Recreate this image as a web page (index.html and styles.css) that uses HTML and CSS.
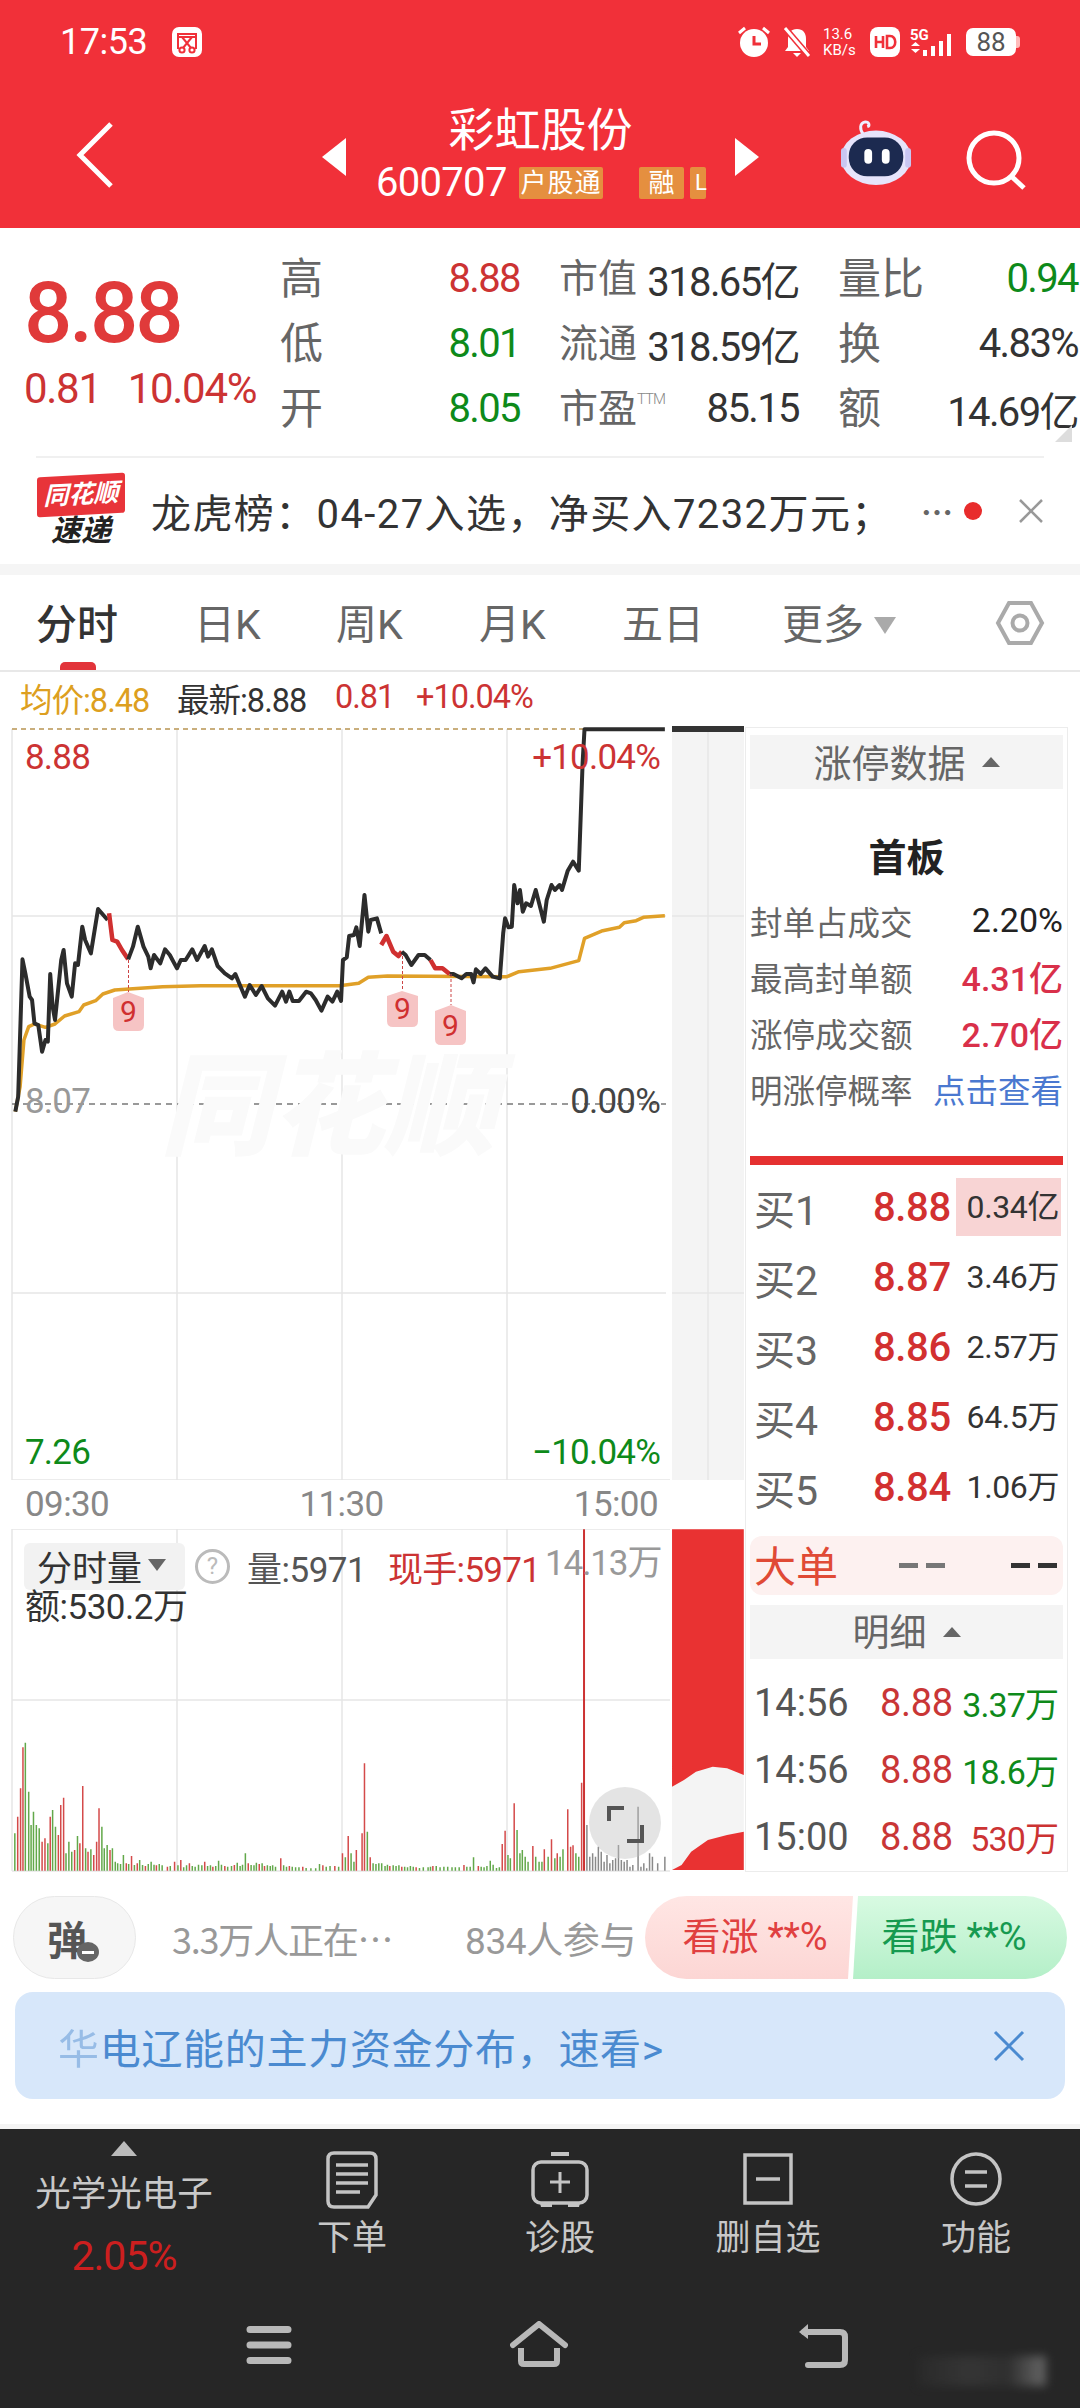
FILE: index.html
```html
<!DOCTYPE html>
<html lang="zh-CN">
<head>
    <meta charset="UTF-8">
    <meta name="viewport" content="width=device-width, initial-scale=1.0">
    <title>彩虹股份</title>
    <link rel="stylesheet" href="styles.css">
</head>
<body>
    <header class="app-head">
        <div class="status-bar">
            <span class="clock">17:53</span>
            <svg class="st-shot" width="30" height="30" viewBox="0 0 30 30">
                <rect width="30" height="30" rx="7" fill="#fff"/>
                <path d="M6 7h18v3H6zM6 7v15M24 7v15" fill="none" stroke="#f03039" stroke-width="2"/>
                <path d="M10 10l9 11M20 10l-9 11" stroke="#f03039" stroke-width="2"/>
                <circle cx="10" cy="23" r="2.6" fill="none" stroke="#f03039" stroke-width="2"/>
                <circle cx="20" cy="23" r="2.6" fill="none" stroke="#f03039" stroke-width="2"/>
            </svg>
            <div class="st-right">
                <svg width="34" height="32" viewBox="0 0 34 32">
                    <circle cx="17" cy="17" r="14" fill="#fff"/>
                    <path d="M17 10v8h7" fill="none" stroke="#f03039" stroke-width="3"/>
                    <path d="M2 7l6-5M32 7l-6-5" stroke="#fff" stroke-width="3"/>
                </svg>
                <svg class="st-gap" width="32" height="32" viewBox="0 0 32 32">
                    <path d="M16 3c-6 0-9 4-9 10v8l-3 4h24l-3-4v-8c0-6-3-10-9-10z" fill="#fff"/>
                    <path d="M12 27h8l-4 4z" fill="#fff"/>
                    <path d="M4 2l24 28" stroke="#f03039" stroke-width="6"/>
                    <path d="M4 2l24 28" stroke="#fff" stroke-width="3"/>
                </svg>
                <div class="st-speed"><span>13.6</span><span>KB/s</span></div>
                <svg class="st-gap" width="30" height="30" viewBox="0 0 30 30">
                    <rect width="30" height="30" rx="8" fill="#fff"/>
                    <path d="M6 9v12M13 9v12M6 15h7M17 9v12h3c7 0 7-12 0-12z" fill="none" stroke="#f03039" stroke-width="2.6"/>
                </svg>
                <svg class="st-gap" width="46" height="32" viewBox="0 0 46 32">
                    <text class="st-5g" x="0" y="14">5G</text>
                    <path d="M1 20h9l-4.500-4zM1 23h9l-4.500 4z" fill="#fff"/>
                    <path d="M15 24v6M23 20v10M31 15v15M39 8v22" stroke="#fff" stroke-width="4"/>
                </svg>
                <div class="st-batt">88</div>
            </div>
        </div>
        <div class="stock-nav">
            <svg class="nav-back" width="38" height="66" viewBox="0 0 38 66">
                <path d="M35 2L4 33l31 31" fill="none" stroke="#fff" stroke-width="5"/>
            </svg>
            <svg class="nav-prev" width="24" height="38" viewBox="0 0 24 38"><path d="M24 0v38L0 19z" fill="#fff"/></svg>
            <div class="stock-name">
                <div class="stock-title">彩虹股份</div>
                <div class="stock-sub">
                    <span class="stock-code">600707</span>
                    <span class="tag tag-hk">户股通</span>
                    <span class="tag tag-rong">融</span>
                    <span class="tag tag-cut">L</span>
                </div>
            </div>
            <svg class="nav-next" width="24" height="38" viewBox="0 0 24 38"><path d="M0 0v38l24-19z" fill="#fff"/></svg>
            <svg class="nav-robot" width="72" height="68" viewBox="0 0 74 68">
                <path d="M24 16c-4-5-4-12 2-13 4 0 5 4 2 5" fill="none" stroke="#eef" stroke-width="3"/>
                <ellipse cx="37" cy="40" rx="36" ry="28" fill="#e6e4fb"/>
                <rect x="1" y="30" width="6" height="20" rx="3" fill="#c9c6f2"/>
                <rect x="67" y="30" width="6" height="20" rx="3" fill="#c9c6f2"/>
                <rect x="9" y="19" width="56" height="40" rx="19" fill="#1c2a50"/>
                <rect x="25" y="31" width="8" height="15" rx="4" fill="#fff"/>
                <rect x="43" y="31" width="8" height="15" rx="4" fill="#fff"/>
            </svg>
            <svg class="nav-search" width="62" height="60" viewBox="0 0 62 60">
                <circle cx="29" cy="28" r="25" fill="none" stroke="#fff" stroke-width="5"/>
                <path d="M46 46l13 12" stroke="#fff" stroke-width="5"/>
            </svg>
        </div>
    </header>

    <section class="quote">
        <div class="quote-now">
            <div class="price-big">8.88</div>
            <div class="price-diff"><span>0.81</span><span>10.04%</span></div>
        </div>
        <div class="quote-grid">
            <div class="stat"><span class="lbl lbl-big">高</span><span class="val val-up">8.88</span></div>
            <div class="stat"><span class="lbl">市值</span><span class="val">318.65亿</span></div>
            <div class="stat"><span class="lbl lbl-big">量比</span><span class="val val-down">0.94</span></div>
            <div class="stat"><span class="lbl lbl-big">低</span><span class="val val-down">8.01</span></div>
            <div class="stat"><span class="lbl">流通</span><span class="val">318.59亿</span></div>
            <div class="stat"><span class="lbl lbl-big">换</span><span class="val">4.83%</span></div>
            <div class="stat"><span class="lbl lbl-big">开</span><span class="val val-down">8.05</span></div>
            <div class="stat"><span class="lbl">市盈<sup class="ttm">TTM</sup></span><span class="val">85.15</span></div>
            <div class="stat"><span class="lbl lbl-big">额</span><span class="val">14.69亿</span></div>
        </div>
        <div class="quote-corner"></div>
    </section>

    <section class="news">
        <div class="news-logo">
            <span class="logo-top">同花顺</span>
            <span class="logo-bottom">速递</span>
        </div>
        <div class="news-text">龙虎榜：04-27入选，净买入7232万元；</div>
        <span class="news-more">…</span>
        <span class="news-dot"></span>
        <svg class="news-close" width="24" height="24" viewBox="0 0 24 24">
            <path d="M1 1l22 22M23 1L1 23" stroke="#999" stroke-width="2.500"/>
        </svg>
    </section>

    <nav class="tabs">
        <a class="tab tab-on">分时</a>
        <a class="tab tab-d">日K</a>
        <a class="tab tab-w">周K</a>
        <a class="tab tab-m">月K</a>
        <a class="tab tab-5">五日</a>
        <a class="tab tab-more">更多<i class="tri-down"></i></a>
        <svg class="tab-gear" width="50" height="46" viewBox="0 0 50 46">
            <path d="M14 3h22l11 20-11 20H14L3 23z" fill="none" stroke="#aaa" stroke-width="4"/>
            <circle cx="25" cy="23" r="7.500" fill="none" stroke="#aaa" stroke-width="4"/>
        </svg>
    </nav>

    <div class="legend">
        <span class="lg-avg">均价:8.48</span>
        <span class="lg-last">最新:8.88</span>
        <span class="lg-diff">0.81</span>
        <span class="lg-pct">+10.04%</span>
    </div>

    <main class="board">
        <div class="chart-col">
            <svg class="price-chart" width="745" height="758" viewBox="0 722 745 758">
                <rect x="672" y="726" width="72" height="754" fill="#f4f4f4"/>
                <rect x="672" y="726" width="72" height="6" fill="#333"/>
                <path d="M708 732V1480M672 916H744M672 1293H744" stroke="#e6e6e6" stroke-width="1.500"/>
                <path d="M12 729V1480M177 729V1480M342 729V1480M507 729V1480M12 1480H670M12 916H666M12 1293H666" stroke="#e6e6e6" stroke-width="1.500"/>
                <path d="M12 729H585" stroke="#c9ae7c" stroke-width="2" stroke-dasharray="5 4"/>
                <path d="M12 1104H666" stroke="#999" stroke-width="2" stroke-dasharray="6 5"/>
                <text class="wm" x="160" y="1146">同花顺</text>

                <svg x="0" y="720" width="750" height="400" viewBox="0 0 1568 1200" preserveAspectRatio="none">
                    <polyline class="line-avg" points="32,1175 42,1100 50,960 60,920 72,912 95,922 115,912 135,888 165,875 175,855 200,842 215,822 240,810 270,807 340,800 420,797 710,797 750,790 770,772 810,768 1060,770 1085,755 1150,745 1210,722 1222,655 1260,632 1295,622 1305,608 1330,602 1345,592 1390,587"/>
                    <polyline class="line-price" points="32,1175 38,1130 47,718 53,760 62,830 67,840 72,910 80,915 88,995 95,960 100,965 105,762 110,860 115,900 128,720 133,690 140,790 150,830 157,730 163,735 172,620 178,660 190,700 205,567 225,600"/>
                    <polyline class="line-down" points="228,580 235,660 245,665 255,690 268,718"/>
                    <polyline class="line-price" points="268,718 278,680 288,620 300,680 310,710 315,745 322,705 335,730 345,688 355,705 370,745 378,720 388,720 402,688 412,720 428,678 435,710 443,688 455,738 470,760 485,775 492,762 500,790 512,830 522,795 535,825 547,798 560,835 575,857 590,815 598,845 605,815 612,843 625,843 640,815 650,820 660,840 672,872 685,830 695,845 705,815 713,843 717,720 725,712 730,648 740,645 745,622 752,678 762,525 770,635 775,600 788,595 797,640"/>
                    <polyline class="line-down" points="797,675 808,648 822,695 833,708 840,695"/>
                    <polyline class="line-price" points="840,695 848,705 860,735 875,705 888,705 900,720"/>
                    <polyline class="line-down" points="900,720 910,745 925,745 940,762"/>
                    <polyline class="line-price" points="940,762 948,762 965,775 975,762 985,762 990,787 995,748 1005,762 1015,745 1030,770 1045,775 1052,640 1056,595 1063,622 1070,620 1075,495 1082,550 1087,510 1093,575 1100,550 1110,558 1120,510 1137,605 1143,540 1153,495 1160,510 1170,495 1175,510 1187,452 1198,425 1210,452 1218,130 1222,28 1390,28"/>
                </svg>

                <path d="M128.500 960V992M402.500 956V991M451 974V1005" stroke="#c44" stroke-width="1" stroke-dasharray="3 2"/>
                <path d="M113 998l15-6 16 6v27q0 6-6 6h-19q-6 0-6-6z" fill="#f6c4c4"/>
                <path d="M387 996l15-5 16 5v25q0 6-6 6h-19q-6 0-6-6z" fill="#f6c4c4"/>
                <path d="M435 1011l16-6 15 6v28q0 6-6 6h-19q-6 0-6-6z" fill="#f6c4c4"/>
                <text class="mark" x="128.500" y="1022">9</text>
                <text class="mark" x="402.500" y="1019">9</text>
                <text class="mark" x="450.500" y="1036">9</text>

                <text class="axis up-fill" x="25" y="769">8.88</text>
                <text class="axis up-fill" x="660" y="769" text-anchor="end">+10.04%</text>
                <text class="axis gray-fill" x="25" y="1113">8.07</text>
                <text class="axis dark-fill" x="660" y="1113" text-anchor="end">0.00%</text>
                <text class="axis down-fill" x="25" y="1464">7.26</text>
                <text class="axis down-fill" x="660" y="1464" text-anchor="end">−10.04%</text>
            </svg>
            <div class="time-axis"><span>09:30</span><span>11:30</span><span>15:00</span></div>
            <div class="vol-wrap">
                <svg class="vol-chart" width="745" height="343" viewBox="0 1529 745 343">
                    <path d="M12 1529V1871M177 1529V1871M342 1529V1871M507 1529V1871M12 1529H670M12 1700H670M12 1871H670" stroke="#e6e6e6" stroke-width="1.500"/>
                    <svg x="0" y="1500" width="750" height="400" viewBox="0 0 1568 1200" preserveAspectRatio="none">
                        <rect x="1405" y="88" width="150" height="1022" fill="#f4f4f4"/>
                        <path d="M1405 88H1555V825L1520 805 1490 800 1455 815 1430 840 1405 860Z" fill="#e93232"/>
                        <path d="M1405 1110L1425 1095 1445 1055 1480 1020 1520 1005 1555 995V1110Z" fill="#e93232"/>
                        <path class="bars bar-up" d="M37 950V1112M43 865V1112M48 742V1112M88 1025V1112M94 1015V1112M105 950V1112M122 1005V1112M127 915V1112M133 893V1112M156 1050V1112M167 1030V1112M173 858V1112M184 1055V1112M196 1065V1112M202 1025V1112M207 925V1112M230 1050V1112M264 1090V1112M275 1068V1112M287 1090V1112M304 1098V1112M327 1096V1112M350 1100V1112M365 1085V1112M378 1080V1112M396 1090V1112M428 1085V1112M445 1100V1112M470 1098V1112M490 1095V1112M519 1090V1112M542 1092V1112M553 1098V1112M587 1075V1112M605 1098V1112M633 1100V1112M675 1096V1112M700 1098V1112M716 1060V1112M728 1008V1112M745 1050V1112M757 1000V1112M762 790V1112M774 1072V1112M815 1098V1112M840 1100V1112M870 1102V1112M905 1098V1112M970 1095V1112M1000 1098V1112M1050 1032V1112M1056 992V1112M1075 910V1112M1114 1038V1112M1138 1048V1112M1153 1018V1112M1165 1060V1112M1187 928V1112M1193 1040V1112M1198 1036V1112M1216 848V1112"/>
                        <path class="bars bar-down" d="M31 1000V1112M53 728V1112M60 875V1112M65 975V1112M70 935V1112M76 975V1112M82 985V1112M100 1030V1112M110 930V1112M116 980V1112M138 1060V1112M144 1025V1112M150 1055V1112M162 1008V1112M179 1045V1112M190 1048V1112M213 980V1112M218 1045V1112M224 1035V1112M235 1045V1112M241 1085V1112M246 1090V1112M252 1092V1112M258 1065V1112M269 1092V1112M281 1095V1112M292 1080V1112M298 1095V1112M310 1092V1112M316 1085V1112M322 1094V1112M333 1092V1112M339 1096V1112M356 1098V1112M372 1096V1112M384 1102V1112M390 1096V1112M402 1098V1112M408 1100V1112M415 1094V1112M422 1096V1112M434 1098V1112M440 1096V1112M451 1098V1112M457 1082V1112M463 1094V1112M476 1100V1112M484 1098V1112M496 1088V1112M502 1098V1112M507 1094V1112M513 1060V1112M525 1095V1112M531 1096V1112M536 1088V1112M548 1090V1112M559 1096V1112M565 1098V1112M570 1096V1112M576 1100V1112M593 1096V1112M599 1100V1112M611 1100V1112M618 1102V1112M625 1102V1112M640 1104V1112M650 1105V1112M660 1105V1112M668 1092V1112M682 1100V1112M690 1098V1112M708 1100V1112M722 1072V1112M734 1060V1112M740 1085V1112M768 995V1112M780 1090V1112M786 1092V1112M792 1090V1112M798 1090V1112M805 1098V1112M810 1094V1112M822 1096V1112M828 1098V1112M834 1096V1112M846 1100V1112M852 1102V1112M858 1098V1112M864 1100V1112M877 1104V1112M885 1102V1112M895 1102V1112M900 1100V1112M912 1098V1112M920 1102V1112M928 1100V1112M936 1100V1112M945 1102V1112M952 1102V1112M960 1102V1112M976 1100V1112M983 1100V1112M990 1072V1112M1006 1100V1112M1012 1102V1112M1018 1098V1112M1025 1082V1112M1031 1094V1112M1038 1104V1112M1044 1102V1112M1062 1065V1112M1067 1075V1112M1081 990V1112M1087 1060V1112M1092 1050V1112M1098 1070V1112M1104 1085V1112M1120 1070V1112M1127 1085V1112M1133 1085V1112M1146 1070V1112M1160 1075V1112M1171 1070V1112M1177 1048V1112M1204 1060V1112M1210 1070V1112"/>
                        <path class="bars bar-flat" d="M1227 975V1112M1233 1070V1112M1239 1060V1112M1245 1070V1112M1251 1040V1112M1257 1055V1112M1263 1085V1112M1269 1065V1112M1275 1090V1112M1281 1080V1112M1287 1075V1112M1293 1035V1112M1299 1080V1112M1305 1085V1112M1311 1080V1112M1317 1100V1112M1323 1095V1112M1334 920V1112M1340 1100V1112M1346 1090V1112M1352 1105V1112M1358 1060V1112M1364 1070V1112M1375 1090V1112M1390 1070V1112"/>
                        <path class="bars bar-now" d="M1221 88V1112"/>
                    </svg>
                    <circle cx="625" cy="1823" r="36" fill="#bfbfbf" fill-opacity=".42"/>
                    <path d="M609 1821v-13h15M642 1825v16h-15" fill="none" stroke="#555" stroke-width="4"/>
                </svg>
                <div class="vol-head">
                    <div class="vol-line">
                        <span class="vol-btn">分时量<i class="tri-small"></i></span>
                        <span class="vol-help">?</span>
                        <span class="vol-qty">量:5971</span>
                        <span class="vol-now">现手:5971</span>
                        <span class="vol-max">14.13万</span>
                    </div>
                    <div class="vol-amt">额:530.2万</div>
                </div>
            </div>
        </div>

        <aside class="side">
            <div class="fold-bar fold-limit">涨停数据<i class="tri-up"></i></div>
            <div class="limit-title">首板</div>
            <div class="limit-row"><span>封单占成交</span><b>2.20%</b></div>
            <div class="limit-row"><span>最高封单额</span><b class="up">4.31亿</b></div>
            <div class="limit-row"><span>涨停成交额</span><b class="up">2.70亿</b></div>
            <div class="limit-row"><span>明涨停概率</span><b class="link">点击查看</b></div>
            <div class="red-rule"></div>
            <div class="book">
                <div class="book-row"><span class="book-lbl">买1</span><span class="book-px">8.88</span><span class="book-vol book-hot">0.34亿</span></div>
                <div class="book-row"><span class="book-lbl">买2</span><span class="book-px">8.87</span><span class="book-vol">3.46万</span></div>
                <div class="book-row"><span class="book-lbl">买3</span><span class="book-px">8.86</span><span class="book-vol">2.57万</span></div>
                <div class="book-row"><span class="book-lbl">买4</span><span class="book-px">8.85</span><span class="book-vol">64.5万</span></div>
                <div class="book-row"><span class="book-lbl">买5</span><span class="book-px">8.84</span><span class="book-vol">1.06万</span></div>
            </div>
            <div class="big-order">
                <span class="big-lbl">大单</span>
                <span class="dash dash-gray"></span>
                <span class="dash dash-dark"></span>
            </div>
            <div class="fold-bar fold-detail">明细<i class="tri-up"></i></div>
            <div class="tick"><span class="tick-time">14:56</span><span class="tick-px">8.88</span><span class="tick-vol down">3.37万</span></div>
            <div class="tick"><span class="tick-time">14:56</span><span class="tick-px">8.88</span><span class="tick-vol down">18.6万</span></div>
            <div class="tick"><span class="tick-time">15:00</span><span class="tick-px">8.88</span><span class="tick-vol up">530万</span></div>
        </aside>
    </main>

    <div class="action-row">
        <div class="danmu"><span>弹</span><i class="danmu-off"></i></div>
        <span class="watching">3.3万人正在…</span>
        <span class="joined">834人参与</span>
        <div class="vote">
            <span class="vote-up">看涨 **%</span>
            <span class="vote-down">看跌 **%</span>
        </div>
    </div>

    <div class="banner">
        <div class="banner-text"><span class="banner-fade">华</span>电辽能的主力资金分布，速看&gt;</div>
        <svg width="32" height="32" viewBox="0 0 32 32">
            <path d="M2 2l28 28M30 2L2 30" stroke="#4a8ad0" stroke-width="3"/>
        </svg>
    </div>

    <div class="gap-strip"></div>

    <footer class="dock">
        <div class="tool-row">
            <div class="ticker">
                <i class="ticker-tri"></i>
                <div class="ticker-name">光学光电子</div>
                <div class="ticker-pct">2.05%</div>
            </div>
            <div class="tool">
                <svg width="52" height="58" viewBox="0 0 52 58">
                    <path d="M8 2h36q6 0 6 6v36l-8 12H8q-6 0-6-6V8q0-6 6-6z" fill="none" stroke="#c4c4c4" stroke-width="3.500"/>
                    <path d="M10 14h32M10 23h32M10 32h32M10 41h24" stroke="#c4c4c4" stroke-width="3.500"/>
                </svg>
                <span>下单</span>
            </div>
            <div class="tool">
                <svg width="58" height="58" viewBox="0 0 58 58">
                    <path d="M20 3h18" stroke="#c4c4c4" stroke-width="4"/>
                    <rect x="2" y="11" width="54" height="41" rx="8" fill="none" stroke="#c4c4c4" stroke-width="3.500"/>
                    <path d="M29 21v21M19 31h20" stroke="#c4c4c4" stroke-width="3"/>
                    <path d="M9 52h12v4H10zM37 52h12l-1 4H37z" fill="#c4c4c4"/>
                </svg>
                <span>诊股</span>
            </div>
            <div class="tool">
                <svg width="50" height="58" viewBox="0 0 50 58">
                    <rect x="2" y="4" width="46" height="48" fill="none" stroke="#c4c4c4" stroke-width="3.500"/>
                    <path d="M13 28h24" stroke="#c4c4c4" stroke-width="3.500"/>
                </svg>
                <span>删自选</span>
            </div>
            <div class="tool">
                <svg width="52" height="58" viewBox="0 0 52 58">
                    <ellipse cx="26" cy="28" rx="24" ry="25" fill="none" stroke="#c4c4c4" stroke-width="3.500"/>
                    <path d="M15 21h22M15 35h22" stroke="#c4c4c4" stroke-width="3.500"/>
                </svg>
                <span>功能</span>
            </div>
        </div>
        <div class="sys-nav">
            <svg class="sys-menu" width="46" height="38" viewBox="0 0 46 38">
                <path d="M4 3.500h38M4 19h38M4 34.500h38" stroke="#b8b8b8" stroke-width="7" stroke-linecap="round"/>
            </svg>
            <svg class="sys-home" width="58" height="46" viewBox="0 0 58 46">
                <path d="M3 24L29 3l26 21" fill="none" stroke="#b8b8b8" stroke-width="6" stroke-linecap="round" stroke-linejoin="round"/>
                <path d="M11 27v13q0 3 3 3h30q3 0 3-3V27" fill="none" stroke="#b8b8b8" stroke-width="6"/>
            </svg>
            <svg class="sys-back" width="52" height="46" viewBox="0 0 52 46">
                <path d="M12 2L3 10l9 7z" fill="#b8b8b8"/>
                <path d="M8 10h36q5 0 5 5v23q0 5-5 5H12" fill="none" stroke="#b8b8b8" stroke-width="6" stroke-linecap="round"/>
            </svg>
            <div class="stamp"></div>
        </div>
    </footer>
</body>
</html>
```

FILE: styles.css
```css
* {
    box-sizing: border-box;
}
body {
    font-family: Roboto, "Noto Sans CJK SC", sans-serif;
    background-color: #fff;
    color: #333;
    margin: 0;
    padding: 0;
    width: 1080px;
    height: 2408px;
    overflow: hidden;
}
svg {
    display: block;
    flex: none;
}
i {
    display: block;
    flex: none;
}
.up { color: #cc3333; }
.down { color: #0e8a1a; }

/* red head */
.app-head {
    background-color: #f13039;
    height: 228px;
    color: #fff;
}
.status-bar {
    height: 62px;
    display: flex;
    align-items: center;
    padding: 22px 62px 0 60px;
}
.clock {
    font-size: 36px;
    line-height: 40px;
    letter-spacing: -0.5px;
    width: 112px;
}
.st-right {
    margin-left: auto;
    display: flex;
    align-items: center;
}
.st-gap {
    margin-left: 10px;
}
.st-speed {
    display: flex;
    flex-direction: column;
    font-size: 15px;
    line-height: 16px;
    margin-left: 10px;
    width: 37px;
}
.st-5g {
    font-size: 15px;
    font-weight: 700;
    fill: #fff;
}
.st-batt {
    position: relative;
    width: 50px;
    height: 28px;
    margin: 0 2px 0 10px;
    background-color: #fff;
    color: #555;
    border-radius: 7px;
    font-size: 26px;
    line-height: 28px;
    text-align: center;
}
.st-batt::after {
    content: "";
    position: absolute;
    right: -4px;
    top: 8px;
    width: 4px;
    height: 12px;
    border-radius: 0 3px 3px 0;
    background-color: #fbb;
}
.stock-nav {
    height: 166px;
    display: flex;
    align-items: flex-start;
    padding: 0 0 0 76px;
}
.nav-back {
    margin-top: 60px;
}
.nav-prev {
    margin: 76px 0 0 208px;
}
.nav-next {
    margin: 76px 0 0 0;
}
.stock-name {
    width: 389px;
}
.stock-title {
    font-size: 46px;
    line-height: 56px;
    margin-top: 40px;
    text-align: center;
}
.stock-sub {
    display: flex;
    align-items: center;
    padding-left: 30px;
    margin-top: 6px;
    height: 38px;
}
.stock-code {
    font-size: 40px;
    line-height: 38px;
    letter-spacing: -0.7px;
    width: 143px;
    flex: none;
}
.tag {
    flex: none;
    height: 32px;
    line-height: 32px;
    background-color: #e58f3f;
    font-size: 26px;
    text-align: center;
    border-radius: 2px;
}
.tag-hk {
    width: 84px;
    letter-spacing: 1px;
}
.tag-rong {
    width: 45px;
    margin-left: 36px;
}
.tag-cut {
    width: 16px;
    margin-left: 6px;
    text-align: left;
    padding-left: 5px;
    font-size: 22px;
}
.nav-robot {
    margin: 56px 0 0 81px;
}
.nav-search {
    margin: 68px 0 0 53px;
}

/* quote block */
.quote {
    position: relative;
    height: 228px;
    display: flex;
    padding-top: 17px;
}
.quote-now {
    width: 280px;
    padding-left: 24px;
}
.price-big {
    font-size: 85px;
    line-height: 90px;
    letter-spacing: -3px;
    font-weight: 500;
    color: #e03a3a;
    margin-top: 23px;
}
.price-diff {
    display: flex;
    gap: 27px;
    font-size: 42px;
    line-height: 50px;
    letter-spacing: -1.3px;
    color: #cc3333;
    margin-top: 6px;
}
.quote-grid {
    display: grid;
    grid-template-columns: 240px 240px 240px;
    grid-auto-rows: 65px;
    column-gap: 39px;
}
.stat {
    display: flex;
    justify-content: space-between;
    align-items: center;
}
.lbl {
    font-size: 39px;
    color: #666;
    white-space: nowrap;
    margin-bottom: 6px;
}
.lbl-big {
    font-size: 43px;
}
.ttm {
    font-size: 15px;
    font-weight: 300;
    letter-spacing: -1px;
    vertical-align: 18px;
    line-height: 0;
    color: #888;
}
.val {
    font-size: 40px;
    letter-spacing: -1.6px;
    color: #333;
    white-space: nowrap;
    margin-top: 2px;
}
.val-up { color: #cc3333; }
.val-down { color: #0e8a1a; }
.quote-corner {
    position: absolute;
    right: 8px;
    bottom: 14px;
    width: 17px;
    height: 17px;
    background-color: #ddd;
    clip-path: polygon(100% 0, 100% 100%, 0 100%);
}
.news {
    height: 108px;
    margin: 0 36px;
    border-top: 2px solid #f0f0f0;
    display: flex;
    align-items: center;
}
.news-logo {
    width: 88px;
    display: flex;
    flex-direction: column;
    align-items: center;
    flex: none;
    margin-left: 1px;
    font-style: italic;
    font-weight: 700;
}
.logo-top {
    background-color: #e8343a;
    color: #fff;
    font-size: 25px;
    line-height: 40px;
    width: 88px;
    text-align: center;
    border-radius: 3px;
    transform: skewY(-3deg);
}
.logo-bottom {
    color: #222;
    font-size: 30px;
    line-height: 32px;
}
.news-text {
    font-size: 40px;
    letter-spacing: 1.4px;
    color: #333;
    margin-left: 26px;
    white-space: nowrap;
    width: 770px;
    flex: none;
}
.news-more {
    font-family: "Noto Sans CJK SC", sans-serif;
    color: #666;
    font-size: 32px;
    width: 43px;
    font-weight: 700;
}
.news-dot {
    width: 18px;
    height: 18px;
    border-radius: 50%;
    background-color: #e82c2c;
    flex: none;
}
.news-close {
    margin-left: 37px;
}

/* tabs */
.tabs {
    margin-top: 0;
    border-top: 11px solid #f5f5f5;
    height: 108px;
    border-bottom: 2px solid #e8e8e8;
    position: relative;
    display: flex;
    align-items: flex-start;
    padding-left: 36px;
}
.tab {
    font-size: 41px;
    line-height: 100px;
    color: #666;
    white-space: nowrap;
    flex: none;
}
.tab-on {
    color: #333;
    font-weight: 500;
    width: 158px;
    position: relative;
    height: 95px;
}
.tab-on::after {
    content: "";
    position: absolute;
    left: 24px;
    top: 87px;
    width: 36px;
    height: 8px;
    background-color: #e2343a;
    border-radius: 5px 5px 0 0;
}
.tab-d { width: 142px; }
.tab-w { width: 143px; }
.tab-m { width: 143px; }
.tab-5 { width: 160px; }
.tab-more {
    display: flex;
    align-items: center;
    height: 100px;
}
.tri-down {
    width: 0;
    height: 0;
    margin-left: 10px;
    border-left: 11px solid transparent;
    border-right: 11px solid transparent;
    border-top: 17px solid #aaa;
}
.tab-gear {
    margin: 25px 0 0 auto;
    margin-right: 35px;
}
.legend {
    height: 50px;
    display: flex;
    align-items: center;
    padding-left: 20px;
    font-size: 32.5px;
    letter-spacing: -1px;
    white-space: nowrap;
}
.lg-avg { color: #dd9f20; width: 157px; }
.lg-last { color: #333; width: 158px; }
.lg-diff { color: #cc3333; width: 81px; }
.lg-pct { color: #cc3333; }

/* charts */
.board {
    display: flex;
    height: 1150px;
}
.chart-col {
    width: 745px;
    flex: none;
}
.line-price, .line-down, .line-avg {
    fill: none;
    stroke-linejoin: round;
    vector-effect: non-scaling-stroke;
}
.line-price { stroke: #2c2c2c; stroke-width: 4; }
.line-down { stroke: #d03030; stroke-width: 4.5; }
.line-avg { stroke: #e0a028; stroke-width: 3.5; }
.axis {
    font-size: 35px;
    letter-spacing: -.8px;
}
.up-fill { fill: #cc3333; }
.down-fill { fill: #0e8a1a; }
.gray-fill { fill: #999; }
.dark-fill { fill: #444; }
.wm {
    font-size: 112px;
    font-weight: 900;
    font-style: italic;
    fill: #fafafa;
}
.mark {
    font-size: 30px;
    fill: #d03030;
    text-anchor: middle;
}
.time-axis {
    height: 49px;
    display: flex;
    justify-content: space-between;
    align-items: center;
    padding: 0 87px 0 25px;
    font-size: 35px;
    letter-spacing: -.6px;
    color: #888;
}
.vol-wrap {
    position: relative;
}
.bars {
    fill: none;
    stroke-width: 1.5;
    vector-effect: non-scaling-stroke;
}
.bar-up { stroke: #d44a4a; }
.bar-down { stroke: #62a84a; }
.bar-flat { stroke: #8a8a8a; }
.bar-now { stroke: #cc3333; stroke-width: 2; }
.vol-head {
    position: absolute;
    left: 24px;
    top: 12px;
    width: 640px;
}
.vol-line {
    display: flex;
    align-items: center;
    white-space: nowrap;
}
.vol-btn {
    width: 161px;
    height: 47px;
    background-color: #f2f2f2;
    border-radius: 6px;
    display: flex;
    align-items: center;
    padding: 0 0 3px 13px;
    font-size: 35px;
    color: #333;
    flex: none;
}
.tri-small {
    width: 0;
    height: 0;
    margin-left: 6px;
    border-left: 9px solid transparent;
    border-right: 9px solid transparent;
    border-top: 12px solid #666;
}
.vol-help {
    width: 35px;
    height: 35px;
    border: 3px solid #bbb;
    border-radius: 50%;
    color: #bbb;
    font-size: 24px;
    line-height: 29px;
    text-align: center;
    margin-left: 10px;
    flex: none;
}
.vol-qty {
    font-size: 35px;
    letter-spacing: -.5px;
    color: #555;
    margin-left: 17px;
    width: 141px;
    flex: none;
}
.vol-now {
    font-size: 35px;
    letter-spacing: -.7px;
    color: #cc3333;
    width: 157px;
    flex: none;
}
.vol-max {
    font-size: 35px;
    letter-spacing: -1.1px;
    color: #999;
    margin-top: -14px;
}
.vol-amt {
    font-size: 35px;
    letter-spacing: -.5px;
    line-height: 40px;
    margin-top: -4px;
    margin-left: 1px;
    color: #333;
}

/* right column */
.side {
    width: 323px;
    height: 1145px;
    margin: 5px 0 0 0;
    border: 1px solid #ececec;
    padding: 7px 4px 0;
    flex: none;
}
.fold-bar {
    background-color: #f4f4f4;
    display: flex;
    align-items: center;
    justify-content: center;
    color: #666;
    padding-bottom: 4px;
}
.fold-limit {
    height: 54px;
    font-size: 38px;
}
.fold-detail {
    height: 54px;
    font-size: 37px;
    margin: 10px 0;
}
.tri-up {
    width: 0;
    height: 0;
    margin: 4px 0 0 16px;
    border-left: 9px solid transparent;
    border-right: 9px solid transparent;
    border-bottom: 10px solid #666;
}
.limit-title {
    height: 50px;
    line-height: 50px;
    margin: 44px 0 9px;
    text-align: center;
    font-size: 38px;
    font-weight: 700;
    color: #222;
}
.limit-row {
    height: 56px;
    display: flex;
    justify-content: space-between;
    align-items: center;
    font-size: 32.5px;
    color: #666;
    white-space: nowrap;
}
.limit-row b {
    font-weight: 400;
    color: #222;
    font-size: 34px;
}
.limit-row b.up {
    color: #d9304a;
    font-weight: 500;
}
.limit-row b.link {
    color: #4a78d0;
    font-size: 32.5px;
}
.red-rule {
    height: 9px;
    margin-top: 40px;
    background-color: #e53030;
}
.book {
    margin-top: 7px;
}
.book-row {
    height: 70px;
    display: grid;
    grid-template-columns: 123px 83px 105px;
    align-items: center;
}
.book-lbl {
    padding-left: 4px;
    font-size: 41px;
    color: #666;
}
.book-px {
    font-size: 40px;
    font-weight: 500;
    letter-spacing: -.4px;
    color: #d23030;
}
.book-vol {
    font-size: 32px;
    letter-spacing: -.4px;
    color: #333;
    text-align: right;
    padding-right: 2px;
    line-height: 58px;
}
.book-hot {
    background-color: #f8d4d4;
}
.big-order {
    height: 59px;
    margin-top: 14px;
    background-color: #fdf1f0;
    border-radius: 12px;
    display: flex;
    align-items: center;
    padding-left: 4px;
}
.big-lbl {
    font-size: 42px;
    color: #e04a35;
    width: 145px;
    flex: none;
    margin-bottom: 4px;
}
.dash {
    width: 48px;
    height: 5px;
    flex: none;
    background: repeating-linear-gradient(90deg, currentColor 0 19px, transparent 19px 27px);
}
.dash-gray { color: #777; }
.dash-dark { color: #333; margin-left: 64px; }
.tick {
    height: 67px;
    display: grid;
    grid-template-columns: 130px 76px 102px;
    align-items: center;
}
.tick-time {
    padding-left: 4px;
    font-size: 38px;
    color: #555;
}
.tick-px {
    font-size: 38px;
    color: #c93636;
    letter-spacing: -.3px;
}
.tick-vol {
    font-size: 34px;
    letter-spacing: -.9px;
    text-align: right;
    white-space: nowrap;
}

/* bottom */
.action-row {
    height: 83px;
    margin-top: 24px;
    display: flex;
    align-items: center;
    padding-left: 13px;
    white-space: nowrap;
}
.danmu {
    position: relative;
    width: 123px;
    height: 83px;
    flex: none;
    background-color: #f6f6f6;
    border: 1px solid #e8e8e8;
    border-radius: 42px;
    display: flex;
    align-items: center;
    padding-left: 33px;
    font-size: 40px;
    font-weight: 700;
    color: #555;
}
.danmu-off {
    position: absolute;
    left: 63px;
    top: 45px;
    width: 22px;
    height: 20px;
    border-radius: 50%;
    background-color: #666;
}
.danmu-off::after {
    content: "";
    display: block;
    margin: 9px auto 0;
    width: 12px;
    height: 3px;
    background-color: #fff;
}
.watching {
    font-family: "Noto Sans CJK SC", sans-serif;
    font-size: 36px;
    color: #999;
    letter-spacing: -1.2px;
    margin-left: 36px;
    width: 293px;
    flex: none;
}
.joined {
    font-size: 37px;
    color: #999;
    letter-spacing: -.4px;
    width: 180px;
    flex: none;
}
.vote {
    display: flex;
    width: 422px;
    height: 83px;
    flex: none;
    font-size: 38px;
    line-height: 83px;
    letter-spacing: -.2px;
    text-align: center;
}
.vote-up {
    width: 208px;
    padding-left: 12px;
    color: #e04040;
    background: linear-gradient(#ffe6e4, #fcd6d4);
    border-radius: 42px 0 0 42px;
    clip-path: polygon(0 0, 100% 0, calc(100% - 5px) 100%, 0 100%);
}
.vote-down {
    width: 214px;
    padding-right: 12px;
    color: #169a50;
    background: linear-gradient(#d8fae2, #b4efc8);
    border-radius: 0 42px 42px 0;
    clip-path: polygon(5px 0, 100% 0, 100% 100%, 0 100%);
}
.banner {
    height: 107px;
    margin: 13px 15px 0;
    background-color: #d7e7fa;
    border-radius: 18px;
    display: flex;
    align-items: center;
    justify-content: space-between;
    padding: 0 40px 0 43px;
}
.banner-text {
    font-size: 41px;
    letter-spacing: .7px;
    color: #4a8ad0;
    white-space: nowrap;
}
.banner-fade {
    opacity: .45;
}
.gap-strip {
    height: 5px;
    margin-top: 25px;
    background-color: #f4f4f4;
}
.dock {
    height: 279px;
    background-color: #262626;
    border-top: 1px solid #262626;
    position: relative;
}
.tool-row {
    height: 181px;
    display: flex;
    align-items: flex-start;
}
.ticker {
    width: 248px;
    display: flex;
    flex-direction: column;
    align-items: center;
}
.ticker-tri {
    width: 0;
    height: 0;
    margin-top: 11px;
    border-left: 13px solid transparent;
    border-right: 13px solid transparent;
    border-bottom: 15px solid #bbb;
}
.ticker-name {
    font-size: 35.5px;
    color: #c8c8c8;
    line-height: 50px;
    margin-top: 13px;
}
.ticker-pct {
    font-size: 41px;
    line-height: 50px;
    color: #cc1f1f;
    letter-spacing: -1px;
    margin-top: 12px;
}
.tool {
    width: 208px;
    display: flex;
    flex-direction: column;
    align-items: center;
    padding-top: 21px;
    font-size: 35px;
    color: #c8c8c8;
}
.tool span {
    line-height: 44px;
    margin-top: 8px;
}
.sys-nav {
    display: flex;
    align-items: flex-start;
    padding-top: 10px;
}
.sys-menu {
    margin: 5px 0 0 246px;
}
.sys-home {
    margin-left: 218px;
}
.sys-back {
    margin: 1px 0 0 228px;
}
.stamp {
    position: absolute;
    left: 918px;
    top: 226px;
    width: 128px;
    height: 30px;
    background: linear-gradient(90deg, #2c2c2c, #3c3c3c 40%, #333 70%, #777 95%);
    filter: blur(5px);
    opacity: .7;
}
```
